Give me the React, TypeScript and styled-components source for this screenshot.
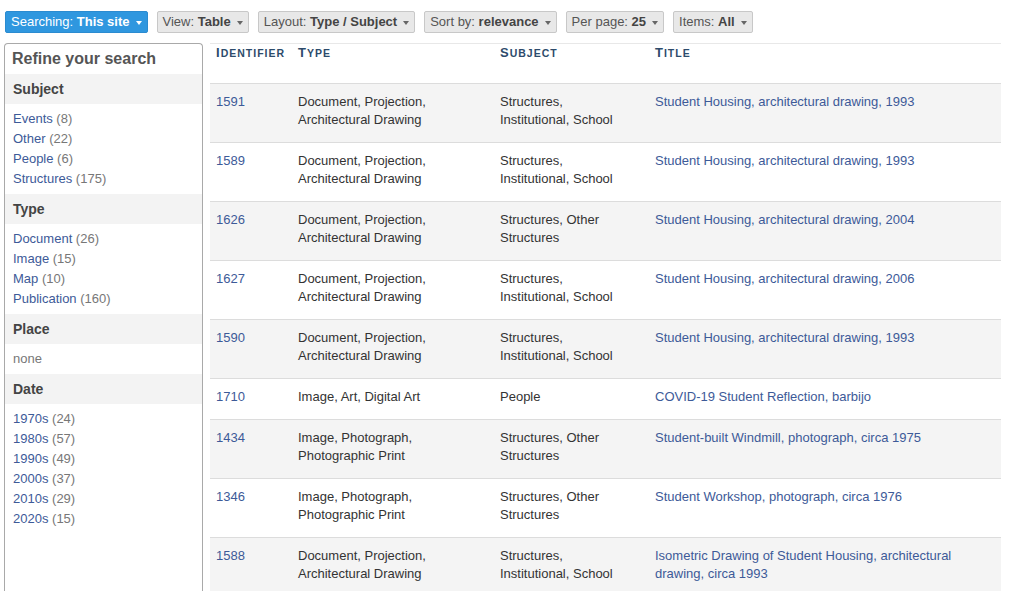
import React from "react";
import styled, { createGlobalStyle } from "styled-components";

const Global = createGlobalStyle`
  html, body { margin: 0; padding: 0; background: #fff; overflow: hidden; }
  body { font-family: "Liberation Sans", Arial, sans-serif; font-size: 13px; color: #333; }
`;

const Page = styled.div`
  display: flex;
  flex-direction: column;
`;

const Toolbar = styled.div`
  display: flex;
  gap: 9px;
  padding: 11px 0 0 5px;
`;

const Dropdown = styled.div<{ $primary?: boolean }>`
  display: flex;
  align-items: center;
  gap: 6px;
  height: 22px;
  box-sizing: border-box;
  padding: 0 5px;
  border-radius: 2px;
  border: 1px solid ${(p) => (p.$primary ? "#2b8bd0" : "#c8c8c8")};
  background: ${(p) => (p.$primary ? "#2f97df" : "#e8e8e8")};
  color: ${(p) => (p.$primary ? "#fff" : "#555")};
  font-size: 13px;
  line-height: 20px;
  white-space: nowrap;
  b { font-weight: bold; color: ${(p) => (p.$primary ? "#fff" : "#444")}; }
`;

const Caret = styled.span<{ $primary?: boolean }>`
  width: 0;
  height: 0;
  border-left: 3.5px solid transparent;
  border-right: 3.5px solid transparent;
  border-top: 4px solid ${(p) => (p.$primary ? "#fff" : "#666")};
  margin-top: 1px;
`;

const Main = styled.div`
  display: flex;
  align-items: stretch;
  gap: 7px;
  padding: 10px 8px 0 4px;
`;

const Sidebar = styled.aside`
  width: 199px;
  flex: none;
  box-sizing: border-box;
  border: 1px solid #a9a9a9;
  border-bottom: none;
  border-radius: 4px 4px 0 0;
`;

const SideTitle = styled.div`
  height: 30px;
  padding: 0 7px;
  font-size: 16px;
  font-weight: bold;
  color: #555;
  line-height: 30px;
`;

const SectionHead = styled.div`
  height: 30px;
  padding: 0 8px;
  background: #f3f3f3;
  font-size: 14px;
  font-weight: bold;
  color: #444;
  line-height: 30px;
`;

const FacetList = styled.ul`
  list-style: none;
  margin: 0;
  padding: 5px 8px;
`;

const FacetItem = styled.li`
  line-height: 20px;
  font-size: 13px;
  color: #777;
`;

const Link = styled.a`
  color: #3d5a98;
  text-decoration: none;
`;

const Results = styled.table`
  flex: 1;
  border-collapse: collapse;
  table-layout: fixed;
  align-self: flex-start;
`;

const HeadRow = styled.tr`
  border-top: 1px solid #e8e8e8;
  border-bottom: 1px solid #dcdcdc;
`;

const Th = styled.th`
  text-align: left;
  vertical-align: top;
  padding: 0 6px 21px;
  line-height: 18px;
  font-size: 10.5px;
  font-weight: bold;
  text-transform: uppercase;
  letter-spacing: 1px;
  color: #2d4b6b;
  &::first-letter {
    font-size: 13px;
  }
`;

const Row = styled.tr<{ $alt: boolean }>`
  background: ${(p) => (p.$alt ? "#f4f4f4" : "#fff")};
  border-bottom: 1px solid #dcdcdc;
`;

const Td = styled.td`
  vertical-align: top;
  padding: 9px 22px 13px 6px;
  line-height: 18px;
  font-size: 13px;
  color: #333;
`;

const facets: { title: string; items: [string, number][] | null }[] = [
  { title: "Subject", items: [["Events", 8], ["Other", 22], ["People", 6], ["Structures", 175]] },
  { title: "Type", items: [["Document", 26], ["Image", 15], ["Map", 10], ["Publication", 160]] },
  { title: "Place", items: null },
  {
    title: "Date",
    items: [["1970s", 24], ["1980s", 57], ["1990s", 49], ["2000s", 37], ["2010s", 29], ["2020s", 15]],
  },
];

const DOC = "Document, Projection, Architectural Drawing";
const SIS = "Structures, Institutional, School";
const SOS = "Structures, Other Structures";
const PHOTO = "Image, Photograph, Photographic Print";

const rows = [
  ["1591", DOC, SIS, "Student Housing, architectural drawing, 1993"],
  ["1589", DOC, SIS, "Student Housing, architectural drawing, 1993"],
  ["1626", DOC, SOS, "Student Housing, architectural drawing, 2004"],
  ["1627", DOC, SIS, "Student Housing, architectural drawing, 2006"],
  ["1590", DOC, SIS, "Student Housing, architectural drawing, 1993"],
  ["1710", "Image, Art, Digital Art", "People", "COVID-19 Student Reflection, barbijo"],
  ["1434", PHOTO, SOS, "Student-built Windmill, photograph, circa 1975"],
  ["1346", PHOTO, SOS, "Student Workshop, photograph, circa 1976"],
  ["1588", DOC, SIS, "Isometric Drawing of Student Housing, architectural drawing, circa 1993"],
];

const toolbar: [string, string, boolean?][] = [
  ["Searching:", "This site", true],
  ["View:", "Table"],
  ["Layout:", "Type / Subject"],
  ["Sort by:", "relevance"],
  ["Per page:", "25"],
  ["Items:", "All"],
];

export default function App() {
  return (
    <Page>
      <Global />
      <Toolbar>
        {toolbar.map(([label, value, primary]) => (
          <Dropdown key={label} $primary={primary}>
            <span>
              {label} <b>{value}</b>
            </span>
            <Caret $primary={primary} />
          </Dropdown>
        ))}
      </Toolbar>
      <Main>
        <Sidebar>
          <SideTitle>Refine your search</SideTitle>
          {facets.map((f) => (
            <div key={f.title}>
              <SectionHead>{f.title}</SectionHead>
              <FacetList>
                {f.items ? (
                  f.items.map(([name, n]) => (
                    <FacetItem key={name}>
                      <Link href="#">{name}</Link> ({n})
                    </FacetItem>
                  ))
                ) : (
                  <FacetItem>none</FacetItem>
                )}
              </FacetList>
            </div>
          ))}
        </Sidebar>
        <Results>
          <colgroup>
            <col style={{ width: 82 }} />
            <col style={{ width: 202 }} />
            <col style={{ width: 155 }} />
            <col />
          </colgroup>
          <thead>
            <HeadRow>
              <Th>Identifier</Th>
              <Th>Type</Th>
              <Th>Subject</Th>
              <Th>Title</Th>
            </HeadRow>
          </thead>
          <tbody>
            {rows.map((r, i) => (
              <Row key={r[0]} $alt={i % 2 === 0}>
                <Td>
                  <Link href="#">{r[0]}</Link>
                </Td>
                <Td>{r[1]}</Td>
                <Td>{r[2]}</Td>
                <Td>
                  <Link href="#">{r[3]}</Link>
                </Td>
              </Row>
            ))}
          </tbody>
        </Results>
      </Main>
    </Page>
  );
}
